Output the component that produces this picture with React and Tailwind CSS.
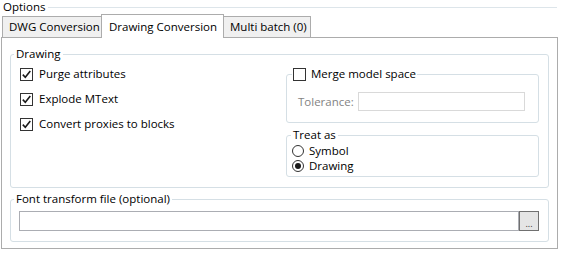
const Check = ({ checked }) => (
  <span className="w-[13px] h-[13px] border border-[#333333] bg-white flex items-center justify-center shrink-0">
    {checked && (
      <svg width="11" height="11" viewBox="0 0 11 11">
        <path d="M1.8 5.6 L4.3 8.2 L9.3 2" fill="none" stroke="#1a1a1a" strokeWidth="1.6" />
      </svg>
    )}
  </span>
);

const Radio = ({ checked }) => (
  <span className="w-[12px] h-[12px] rounded-full border border-[#333333] bg-white flex items-center justify-center shrink-0">
    {checked && <span className="w-[6px] h-[6px] rounded-full bg-[#1a1a1a]" />}
  </span>
);

const CheckRow = ({ label }) => (
  <div className="flex items-center gap-[6px] h-[16px]">
    <Check checked />
    <span>{label}</span>
  </div>
);

export default function App() {
  return (
    <div className="w-[561px] h-[254px] bg-white overflow-hidden text-[11.5px] leading-[16px] text-black whitespace-nowrap font-['Open_Sans',sans-serif]">
      {/* Options header */}
      <div className="flex items-center h-[14px] leading-[14px]">
        <span className="pl-[3px] pr-[3px]">Options</span>
        <div className="flex-1 mr-[4px] border-t border-[#dde5ea]" />
      </div>

      {/* Tabs */}
      <div className="flex items-end h-[23px] pl-[2px]">
        <div className="h-[21px] w-[100px] border border-b-0 border-[#acacac] bg-[#f0f0f0] flex items-center pl-[6px]">
          DWG Conversion
        </div>
        <div className="relative z-10 -mb-px h-[24px] w-[123px] -ml-px border border-b-0 border-[#acacac] bg-white flex items-center pl-[7px]">
          Drawing Conversion
        </div>
        <div className="h-[21px] w-[88px] -ml-px border border-b-0 border-[#acacac] bg-[#f0f0f0] flex items-center pl-[6px]">
          Multi batch (0)
        </div>
      </div>

      {/* Panel */}
      <div className="ml-[1px] w-[557px] h-[212px] border border-[#acacac] px-[8px] pt-[8px]">
        <fieldset className="border border-[#d5dfe5] rounded-[3px] h-[142px]">
          <legend className="ml-[3px] px-[2px]">Drawing</legend>
          <div className="flex pt-[4px]">
            <div className="flex-1 flex flex-col gap-[9px] pl-[9px]">
              <CheckRow label="Purge attributes" />
              <CheckRow label="Explode MText" />
              <CheckRow label="Convert proxies to blocks" />
            </div>
            <div className="w-[253px] mr-[9px] flex flex-col">
              <fieldset className="border border-[#d5dfe5] rounded-[3px] h-[57px]">
                <legend className="ml-[5px] px-[1px] flex items-center gap-[5px]">
                  <span className="w-[13px] h-[13px] border border-[#333333] bg-white" />
                  <span>Merge model space</span>
                </legend>
                <div className="flex items-center pl-[11px] pt-[10px]">
                  <span className="text-[#838383] mr-[4px]">Tolerance:</span>
                  <div className="w-[167px] h-[19px] border border-[#d9d9d9] bg-white" />
                </div>
              </fieldset>
              <fieldset className="mt-[4px] border border-[#d5dfe5] rounded-[3px] h-[50px]">
                <legend className="ml-[4px] px-[2px]">Treat as</legend>
                <div className="flex flex-col pl-[5px] leading-[15px]">
                  <div className="flex items-center gap-[5px] h-[15px]">
                    <Radio />
                    <span>Symbol</span>
                  </div>
                  <div className="flex items-center gap-[5px] h-[15px]">
                    <Radio checked />
                    <span>Drawing</span>
                  </div>
                </div>
              </fieldset>
            </div>
          </div>
        </fieldset>

        <fieldset className="mt-[3px] border border-[#d5dfe5] rounded-[3px] h-[51px]">
          <legend className="ml-[3px] px-[2px]">Font transform file (optional)</legend>
          <div className="flex pl-[8px] pr-[9px] pt-[4px]">
            <div className="flex-1 h-[20px] border border-[#abadb3] bg-white" />
            <div className="w-[20px] h-[20px] border border-[#707070] bg-[#e5e5e5] flex items-end justify-center text-[9px] leading-[12px] text-[#333333]">
              ...
            </div>
          </div>
        </fieldset>
      </div>
    </div>
  );
}
